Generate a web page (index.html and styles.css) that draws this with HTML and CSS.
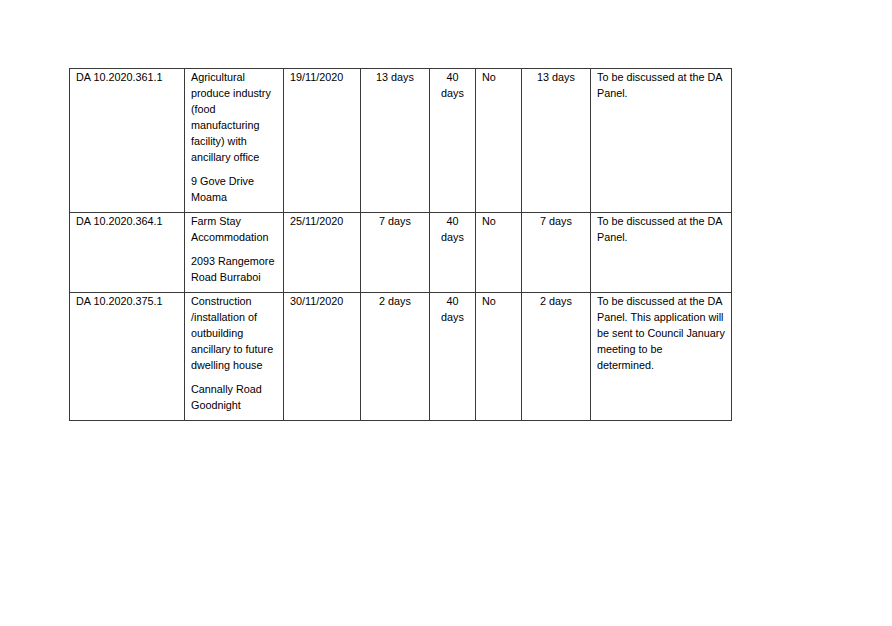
FILE: index.html
```html
<!DOCTYPE html>
<html>
<head>
<meta charset="utf-8">
<link rel="stylesheet" href="styles.css">
</head>
<body>
<table class="da-table">
  <colgroup>
    <col class="c-ref"><col class="c-desc"><col class="c-date"><col class="c-days">
    <col class="c-limit"><col class="c-stop"><col class="c-days2"><col class="c-note">
  </colgroup>
  <tr>
    <td><p>DA 10.2020.361.1</p></td>
    <td><p>Agricultural<br>produce industry<br>(food<br>manufacturing<br>facility) with<br>ancillary office</p><p>9 Gove Drive<br>Moama</p></td>
    <td><p>19/11/2020</p></td>
    <td class="center"><p>13 days</p></td>
    <td class="center"><p>40<br>days</p></td>
    <td><p>No</p></td>
    <td class="center"><p>13 days</p></td>
    <td><p>To be discussed at the DA<br>Panel.</p></td>
  </tr>
  <tr>
    <td><p>DA 10.2020.364.1</p></td>
    <td><p>Farm Stay<br>Accommodation</p><p>2093 Rangemore<br>Road Burraboi</p></td>
    <td><p>25/11/2020</p></td>
    <td class="center"><p>7 days</p></td>
    <td class="center"><p>40<br>days</p></td>
    <td><p>No</p></td>
    <td class="center"><p>7 days</p></td>
    <td><p>To be discussed at the DA<br>Panel.</p></td>
  </tr>
  <tr>
    <td><p>DA 10.2020.375.1</p></td>
    <td><p>Construction<br>/installation of<br>outbuilding<br>ancillary to future<br>dwelling house</p><p>Cannally Road<br>Goodnight</p></td>
    <td><p>30/11/2020</p></td>
    <td class="center"><p>2 days</p></td>
    <td class="center"><p>40<br>days</p></td>
    <td><p>No</p></td>
    <td class="center"><p>2 days</p></td>
    <td><p>To be discussed at the DA<br>Panel. This application will<br>be sent to Council January<br>meeting to be<br>determined.</p></td>
  </tr>
</table>
</body>
</html>
```

FILE: styles.css
```css
html, body {
  margin: 0;
  padding: 0;
  background: #ffffff;
}
body {
  font-family: "Liberation Sans", Arial, sans-serif;
  font-size: 10.8px;
  line-height: 16px;
  color: #000;
}
.da-table {
  margin: 68px 0 0 69px;
  border-collapse: collapse;
  table-layout: fixed;
  width: 662px;
}
.c-ref { width: 115px; }
.c-desc { width: 99px; }
.c-date { width: 77px; }
.c-days { width: 69px; }
.c-limit { width: 46px; }
.c-stop { width: 46px; }
.c-days2 { width: 69px; }
.c-note { width: 141px; }
.da-table td {
  border: 1px solid #3a3a3a;
  vertical-align: top;
  padding: 0 2px 0 6px;
  white-space: nowrap;
}
.da-table td.center {
  text-align: center;
  padding: 0 2px;
}
.da-table p {
  margin: 0 0 8px 0;
}
.da-table p:last-child {
  margin-bottom: 7px;
}
```
